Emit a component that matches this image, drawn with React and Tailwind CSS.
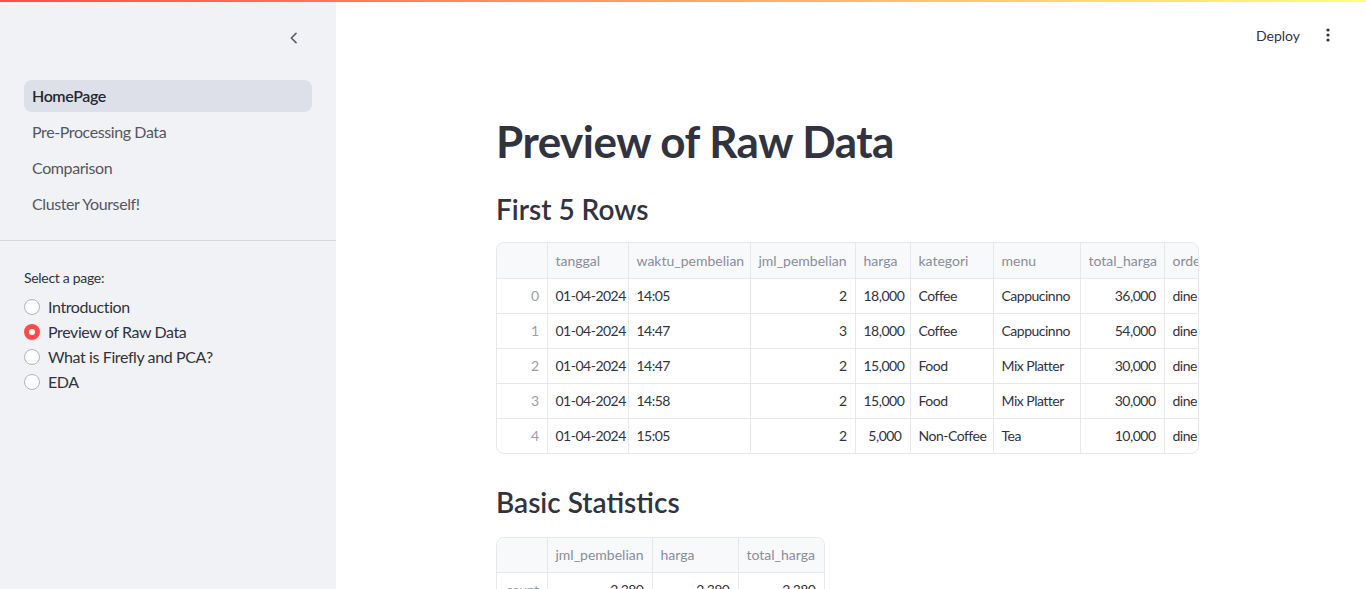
import React from "react";

const font = { fontFamily: "Lato, 'Noto Sans', sans-serif" };

const cols1 = [
  { k: "", w: 50, right: true, idx: true },
  { k: "tanggal", w: 81 },
  { k: "waktu_pembelian", w: 122 },
  { k: "jml_pembelian", w: 105, right: true },
  { k: "harga", w: 55, right: true },
  { k: "kategori", w: 83 },
  { k: "menu", w: 87 },
  { k: "total_harga", w: 84, right: true },
  { k: "order_type", w: 100 },
];

const rows1 = [
  ["0", "01-04-2024", "14:05", "2", "18,000", "Coffee", "Cappucinno", "36,000", "dine in"],
  ["1", "01-04-2024", "14:47", "3", "18,000", "Coffee", "Cappucinno", "54,000", "dine in"],
  ["2", "01-04-2024", "14:47", "2", "15,000", "Food", "Mix Platter", "30,000", "dine in"],
  ["3", "01-04-2024", "14:58", "2", "15,000", "Food", "Mix Platter", "30,000", "dine in"],
  ["4", "01-04-2024", "15:05", "2", "5,000", "Non-Coffee", "Tea", "10,000", "dine in"],
];

const cols2 = [
  { k: "", w: 50, right: true, idx: true },
  { k: "jml_pembelian", w: 105, right: true },
  { k: "harga", w: 86, right: true },
  { k: "total_harga", w: 86, right: true },
];

const rows2 = [
  ["count", "2,380", "2,380", "2,380"],
  ["mean", "1.27", "19,512", "24,890"],
];

function DataTable({ cols, rows, width, headH = 35 }) {
  const total = cols.reduce((a, c) => a + c.w, 0);
  return (
    <div
      className="border border-[#e6e8ec] rounded-lg overflow-hidden bg-white shrink-0"
      style={{ width }}
    >
      <table className="border-collapse table-fixed text-[14px]" style={{ width: total }}>
        <colgroup>
          {cols.map((c, i) => (
            <col key={i} style={{ width: c.w }} />
          ))}
        </colgroup>
        <thead>
          <tr className="bg-[#f8f9fb]" style={{ height: headH }}>
            {cols.map((c, i) => (
              <th
                key={i}
                className="font-normal text-left text-[#8a8d99] px-2 border-r border-b border-[#e6e8ec] whitespace-nowrap overflow-hidden"
              >
                {c.k}
              </th>
            ))}
          </tr>
        </thead>
        <tbody>
          {rows.map((r, ri) => (
            <tr key={ri} className="h-[35px]">
              {r.map((v, ci) => (
                <td
                  key={ci}
                  className={
                    "px-2 border-r border-[#e6e8ec] whitespace-nowrap overflow-hidden tracking-[-0.5px] " +
                    (ri < rows.length - 1 ? "border-b " : "") +
                    (cols[ci].right ? "text-right " : "text-left ") +
                    (cols[ci].idx ? "text-[#9a9da8]" : "text-[#31333f]")
                  }
                >
                  {v}
                </td>
              ))}
            </tr>
          ))}
        </tbody>
      </table>
    </div>
  );
}

function Radio({ label, checked }) {
  return (
    <div className="flex items-center h-[25px]">
      {checked ? (
        <span className="w-4 h-4 shrink-0 rounded-full bg-[#ff4b4b] flex items-center justify-center">
          <span className="w-[6px] h-[6px] rounded-full bg-white" />
        </span>
      ) : (
        <span className="w-4 h-4 shrink-0 rounded-full bg-white border border-[#b2b4bb]" />
      )}
      <span className="ml-2 text-[16px] text-[#31333f] tracking-[-0.4px]">{label}</span>
    </div>
  );
}

export default function App() {
  const nav = ["HomePage", "Pre-Processing Data", "Comparison", "Cluster Yourself!"];
  return (
    <div className="h-screen w-full flex flex-col overflow-hidden bg-white" style={font}>
      <div className="h-[2px] w-full shrink-0 bg-[linear-gradient(90deg,#ff4b4b,#fffd80)]" />
      <div className="flex flex-1 min-h-0">
        {/* Sidebar */}
        <aside className="w-[336px] shrink-0 bg-[#f0f2f6] flex flex-col">
          <div className="h-[78px] flex items-start justify-end pr-[34px] pt-[28px]">
            <svg width="16" height="16" viewBox="0 0 24 24" fill="none" stroke="#5f6270" strokeWidth="2.6" strokeLinecap="round" strokeLinejoin="round">
              <path d="M15 5l-7 7 7 7" />
            </svg>
          </div>
          <nav className="px-6 flex flex-col gap-1 pb-[20px] border-b border-[#d6d8de]">
            {nav.map((n, i) => (
              <div
                key={n}
                className={
                  "h-8 flex items-center pl-2 rounded-lg text-[16px] tracking-[-0.4px] " +
                  (i === 0 ? "bg-[#dde0e8] font-semibold text-[#262730]" : "text-[#55575f]")
                }
              >
                {n}
              </div>
            ))}
          </nav>
          <div className="px-6 pt-[28px]">
            <div className="text-[14px] text-[#31333f] h-[18px] leading-[18px] tracking-[-0.3px]">Select a page:</div>
            <div className="mt-[7px] flex flex-col">
              <Radio label="Introduction" />
              <Radio label="Preview of Raw Data" checked />
              <Radio label="What is Firefly and PCA?" />
              <Radio label="EDA" />
            </div>
          </div>
        </aside>

        {/* Main */}
        <main className="flex-1 min-w-0 relative overflow-hidden">
          <header className="h-[60px] flex items-center justify-end pr-[36px]">
            <span className="text-[14px] text-[#31333f] mr-[26px] mt-[6px]">Deploy</span>
            <svg width="4" height="14" viewBox="0 0 4 14" className="mt-[6px]">
              <circle cx="2" cy="2" r="1.6" fill="#31333f" />
              <circle cx="2" cy="7" r="1.6" fill="#31333f" />
              <circle cx="2" cy="12" r="1.6" fill="#31333f" />
            </svg>
          </header>
          <div className="w-[704px] ml-[160px] flex flex-col">
            <h1 className="mt-[53px] h-[53px] leading-[53px] text-[44px] font-bold text-[#31333f] tracking-[-0.5px]">
              Preview of Raw Data
            </h1>
            <h3 className="mt-[24px] h-[34px] leading-[34px] text-[28px] font-semibold text-[#31333f]">
              First 5 Rows
            </h3>
            <div className="mt-[16px]">
              <DataTable cols={cols1} rows={rows1} width={703} />
            </div>
            <h3 className="mt-[31px] h-[34px] leading-[34px] text-[28px] font-semibold text-[#31333f]">
              Basic Statistics
            </h3>
            <div className="mt-[18px]">
              <DataTable cols={cols2} rows={rows2} width={329} headH={34} />
            </div>
          </div>
        </main>
      </div>
    </div>
  );
}
